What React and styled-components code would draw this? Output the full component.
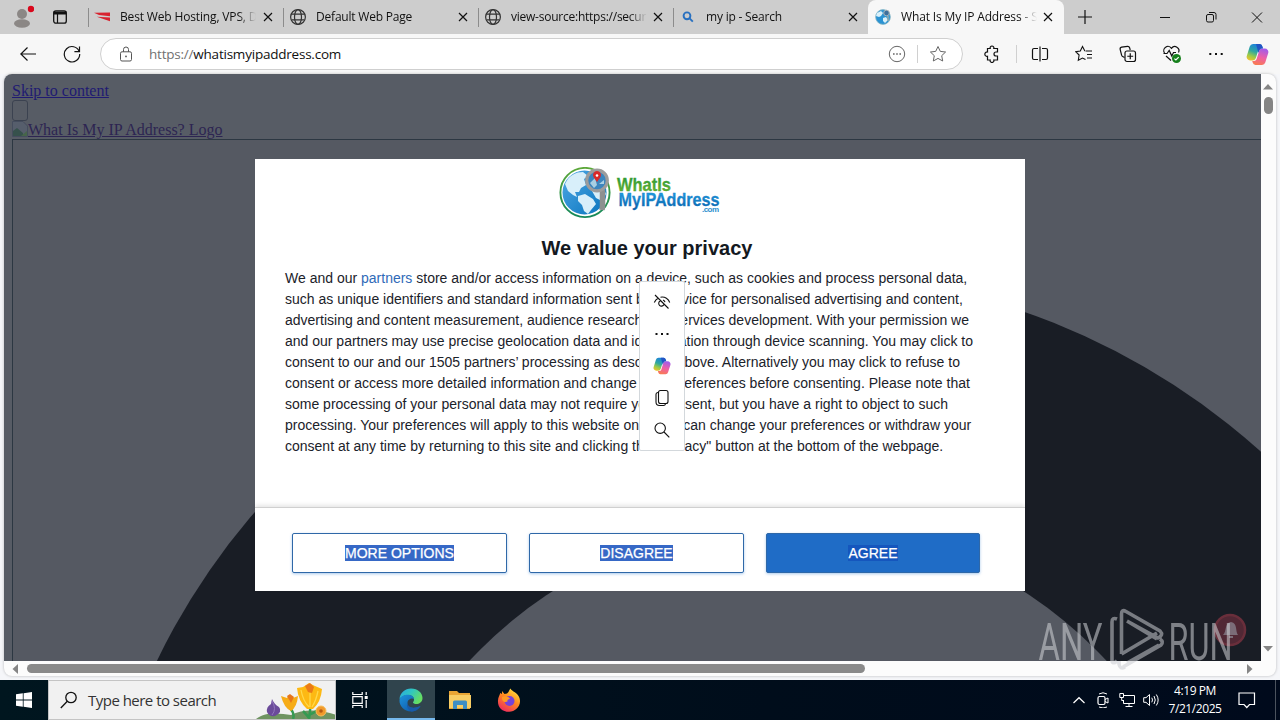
import React from "react";
import styled, { createGlobalStyle, css } from "styled-components";

const tabs = [
  { title: "Best Web Hosting, VPS, D", icon: "flag" },
  { title: "Default Web Page", icon: "globe", spacing: "-0.2px" },
  { title: "view-source:https://secur", icon: "globe", spacing: "-0.24px" },
  { title: "my ip - Search", icon: "search", spacing: "-0.2px" },
  { title: "What Is My IP Address - S", icon: "earth", active: true },
];

const paragraph = [
  "such as unique identifiers and standard information sent by a device for personalised advertising and content,",
  "advertising and content measurement, audience research and services development. With your permission we",
  "and our partners may use precise geolocation data and identification through device scanning. You may click to",
  "consent to our and our 1505 partners’ processing as described above. Alternatively you may click to refuse to",
  "consent or access more detailed information and change your preferences before consenting. Please note that",
  "some processing of your personal data may not require your consent, but you have a right to object to such",
  "processing. Your preferences will apply to this website only. You can change your preferences or withdraw your",
  'consent at any time by returning to this site and clicking the "Privacy" button at the bottom of the webpage.',
];

const Icon = ({ size = 16, w, h, box, children, ...rest }) => (
  <Svg
    width={w || size}
    height={h || size}
    viewBox={box || `0 0 ${w || size} ${h || size}`}
    {...rest}
  >
    {children}
  </Svg>
);

const Copilot = ({ size, id }) => (
  <Icon size={size} box="0 0 24 24">
    <defs>
      <linearGradient id={`${id}a`} x1="0.6" y1="0" x2="0.2" y2="1">
        <stop offset="0" stopColor="#1c7fe0" />
        <stop offset="0.45" stopColor="#2fa8a0" />
        <stop offset="0.75" stopColor="#9fcb46" />
        <stop offset="1" stopColor="#f2c12e" />
      </linearGradient>
      <linearGradient id={`${id}b`} x1="0.6" y1="0" x2="0.3" y2="1">
        <stop offset="0" stopColor="#a45be8" />
        <stop offset="0.5" stopColor="#ee5fa6" />
        <stop offset="1" stopColor="#f97c4f" />
      </linearGradient>
    </defs>
    <path
      d="M17.500 5.200 16.900 3.300A3 3 0 0 0 14.200 1H7.300A3.600 3.600 0 0 0 3.900 3.600L.8 13.500A3.700 3.700 0 0 0 4.300 18.200H7A3.500 3.500 0 0 0 10.300 15.700L13 7A2.700 2.700 0 0 1 15.500 5.200Z"
      fill={`url(#${id}a)`}
      stroke="none"
    />
    <path
      d="M6.500 18.800 7.100 20.700A3 3 0 0 0 9.800 23H16.700A3.600 3.600 0 0 0 20.100 20.400L23.200 10.500A3.700 3.700 0 0 0 19.700 5.800H17A3.500 3.500 0 0 0 13.700 8.300L11 17A2.700 2.700 0 0 1 8.500 18.800Z"
      fill={`url(#${id}b)`}
      stroke="none"
    />
    <path d="M10.500 1H14.200A2.800 2.800 0 0 1 16.900 3.200L17.800 5.800H17A3.500 3.500 0 0 0 13.700 8.300L13 10.500 11.500 5Z" fill="#2355c4" stroke="none" />
  </Icon>
);

const Favicon = ({ kind }) => {
  if (kind === "flag") {
    return (
      <Icon>
        <path d="M0 3.800 16 3.400V7.200L5 6ZM2.800 7.700 16 8.600V12.200Z" fill="#d8232f" stroke="none" />
      </Icon>
    );
  }
  if (kind === "globe") {
    return (
      <Icon strokeWidth="1.200" stroke="#333">
        <circle cx="8" cy="8" r="7.400" />
        <ellipse cx="8" cy="8" rx="3.500" ry="7.400" />
        <path d="M1.500 5.200H14.500M1.500 10.800H14.500" />
      </Icon>
    );
  }
  if (kind === "search") {
    return (
      <Icon stroke="#2870c0" strokeWidth="1.900">
        <circle cx="7" cy="6.800" r="3.400" />
        <path d="M9.400 9.200 12.800 12.600" />
      </Icon>
    );
  }
  return (
    <Icon>
      <circle cx="8" cy="8" r="7.400" fill="#2b93d3" stroke="#8cb8c4" strokeWidth="0.8" />
      <path d="M2 4 6 2 8 4 6 7 4 8 1 7ZM8 9 11 8 13 11 10 14 8 12Z" fill="#d9f0fa" stroke="none" />
      <circle cx="11.500" cy="4" r="2.800" fill="#3c6f9d" stroke="#aab4b8" />
      <path d="M13 7V12" stroke="#9aa" strokeWidth="1.500" />
    </Icon>
  );
};

const Close = () => (
  <Icon>
    <path d="M4 4 12 12M12 4 4 12" strokeWidth="1.200" />
  </Icon>
);

const TabStrip = () => (
  <Strip>
    <Profile>
      <Icon w={24} h={24}>
        <circle cx="12" cy="9" r="5" fill="#8b8785" stroke="none" />
        <ellipse cx="12" cy="18.500" rx="8" ry="4.200" fill="#8b8785" stroke="none" />
        <circle cx="21" cy="4" r="3.200" fill="#d9081c" stroke="none" />
      </Icon>
      <Icon w={16} h={16}>
        <rect x="1.700" y="1.800" width="12.600" height="12.400" rx="2.200" strokeWidth="1.300" />
        <path d="M1.700 4H14.300" strokeWidth="3" />
        <path d="M5.500 4V14" strokeWidth="1.200" />
      </Icon>
    </Profile>
    {tabs.map((tab) => (
      <Tab key={tab.title} $active={tab.active}>
        <Favicon kind={tab.icon} />
        <TabTitle $spacing={tab.spacing}>{tab.title}</TabTitle>
        <Close />
      </Tab>
    ))}
    <NewTab>
      <Icon>
        <path d="M8 1V15M1 8H15" strokeWidth="1.200" />
      </Icon>
    </NewTab>
    <WindowButtons>
      <Icon>
        <path d="M3 8.500H13" />
      </Icon>
      <Icon>
        <rect x="3.500" y="5.500" width="7" height="7.500" rx="1.500" />
        <path d="M6 3.500H11A2 2 0 0 1 13 5.500V10.500" />
      </Icon>
      <Icon>
        <path d="M3 3.500 13 13.500M13 3.500 3 13.500" />
      </Icon>
    </WindowButtons>
  </Strip>
);

const Toolbar = () => (
  <Bar>
    <NavButton>
      <Icon>
        <path d="M16 8H.8M7.500 1.500.8 8 7.500 14.500" strokeWidth="1.200" />
      </Icon>
    </NavButton>
    <NavButton>
      <Icon size={18}>
        <path d="M16.200 6.500A7.700 7.700 0 1 0 16.700 9M16.500 1.500V6.600H11.400" strokeWidth="1.200" />
      </Icon>
    </NavButton>
    <Address>
      <Icon stroke="#555">
        <rect x="2.500" y="5.800" width="11" height="9.200" rx="1.500" />
        <path d="M5.500 5.800V3.500A2.500 2.500 0 0 1 10.500 3.500V5.800" />
        <circle cx="8" cy="10.400" r="0.9" fill="#555" stroke="none" />
      </Icon>
      <Url>
        <span>https://</span>whatismyipaddress.com
      </Url>
      <Icon size={18} stroke="#666">
        <circle cx="9" cy="9" r="7.700" />
        <path d="M5 9H6.600M8.200 9H9.800M11.400 9H13" strokeWidth="1.600" />
      </Icon>
      <Divider $gap="11px" />
      <Icon size={18} stroke="#666">
        <path d="M9 1.500 11.300 6.400 16.600 7 12.700 10.700 13.700 16 9 13.400 4.300 16 5.300 10.700 1.400 7 6.700 6.400Z" />
      </Icon>
    </Address>
    <Tools>
      <ToolSlot $w="47px">
        <Icon size={18} strokeWidth="1.200">
          <path d="M4.500 3.500H7.200A1.900 1.900 0 1 1 10.800 3.500H14.500V7H13A2 2 0 0 0 13 11H14.500V15H10.800A1.900 1.900 0 1 1 7.200 15H4.500V11.300A2.200 2.200 0 1 1 4.500 7Z" />
        </Icon>
      </ToolSlot>
      <Divider $gap="1px" />
      <ToolSlot $w="44px">
        <Icon size={18} strokeWidth="1.200">
          <path d="M9 1.500V16.500M7 3.500H3A1.500 1.500 0 0 0 1.500 5V13A1.500 1.500 0 0 0 3 14.500H7M11 3.500H15A1.500 1.500 0 0 1 16.500 5V13A1.500 1.500 0 0 1 15 14.500H11" />
        </Icon>
      </ToolSlot>
      <ToolSlot $w="44px">
        <Icon size={18} strokeWidth="1.100">
          <path d="M10.500 6H17M12 9.500H17M12 13H17" />
          <path d="M10 5.800 9.700 5.800 7.500 1.500 5.300 6 .7 6.600 4.100 10 3.300 15.200 7.500 13 10.500 14.600" />
        </Icon>
      </ToolSlot>
      <ToolSlot $w="44px">
        <Icon size={18} strokeWidth="1.200">
          <rect x="6" y="6" width="10.500" height="10.500" rx="2" />
          <path d="M11.250 8.300V14.200M8.300 11.250H14.200M5.500 12.500 3.700 11.500A2 2 0 0 1 2.600 10L1.200 4.600A2 2 0 0 1 2.600 2.200L8.500 1.300A2 2 0 0 1 10.600 2.700L11.200 5" />
        </Icon>
      </ToolSlot>
      <ToolSlot $w="44px">
        <Icon size={20} strokeWidth="1.200">
          <path d="M2.500 9A4 4 0 0 1 9.500 4.300 4.100 4.100 0 0 1 16.500 8.500M4 12 9 16.500M1.500 9.500H5L7.200 6.500 9.800 12 11.500 8.500H14" />
          <circle cx="14.500" cy="14.500" r="4.500" fill="#16801c" stroke="none" />
          <path d="M12.400 14.600 13.900 16 16.700 13.200" stroke="#fff" />
        </Icon>
      </ToolSlot>
      <ToolSlot $w="44px">
        <Icon>
          <path d="M1.300 8H3.300M7 8H9M12.700 8H14.700" strokeWidth="2" />
        </Icon>
      </ToolSlot>
      <ToolSlot $w="39px">
        <Copilot size={23} id="bar" />
      </ToolSlot>
    </Tools>
  </Bar>
);

const SiteLogo = () => (
  <Icon w={162} h={52}>
    <defs>
      <linearGradient id="ocean" x1="0" y1="0" x2="1" y2="1">
        <stop offset="0" stopColor="#4fa8e4" />
        <stop offset="1" stopColor="#0874be" />
      </linearGradient>
      <linearGradient id="hoop" x1="0" y1="0" x2="0" y2="1">
        <stop offset="0" stopColor="#5da83a" />
        <stop offset="1" stopColor="#14885a" />
      </linearGradient>
      <linearGradient id="blueText" x1="0" y1="0" x2="0" y2="1">
        <stop offset="0.2" stopColor="#1f9be0" />
        <stop offset="1" stopColor="#0b5fa6" />
      </linearGradient>
      <linearGradient id="greenText" x1="0" y1="0" x2="0" y2="1">
        <stop offset="0.2" stopColor="#2f9a38" />
        <stop offset="1" stopColor="#74b82c" />
      </linearGradient>
    </defs>
    <circle cx="26" cy="25.500" r="24.600" stroke="url(#hoop)" strokeWidth="1.900" />
    <circle cx="25.500" cy="25.500" r="22" fill="url(#ocean)" stroke="none" />
    <path
      d="M6 17C10 8 17 5 24 5L29 9 25 12 27 18 22 21 20 25 16 25 18 30 14 28 9 24ZM19 29 26 27 34 32 37 37 32 43 29 47 25 44 23 38 19 34ZM33 24 44 20 47 27 43 34 37 31Z"
      fill="#d8effa"
      stroke="none"
    />
    <path d="M43.500 23V39L43 43" stroke="#8e9090" strokeWidth="5.500" />
    <circle cx="38" cy="13.500" r="10.300" fill="#3c85bd" stroke="#9c9c9c" strokeWidth="3.200" />
    <path d="M31 16 36 11 38 18 35 21ZM40 17 45 13 45 17Z" fill="#a8cfe3" stroke="none" />
    <path d="M38 15 34.500 10A4 4 0 1 1 41.500 10Z" fill="#da2929" stroke="none" />
    <circle cx="38" cy="8.500" r="1.300" fill="#fff" stroke="none" />
    <LogoText x="58" y="24" textLength="54" lengthAdjust="spacingAndGlyphs" fill="url(#greenText)" stroke="#45a336">
      WhatIs
    </LogoText>
    <LogoText x="59.500" y="38.500" textLength="101" lengthAdjust="spacingAndGlyphs" fill="url(#blueText)" stroke="#1880c8">
      MyIPAddress
    </LogoText>
    <LogoText $size="8px" x="143" y="44.500" textLength="17" fill="#2d8fce">
      .com
    </LogoText>
  </Icon>
);

const ConsentDialog = () => (
  <Dialog>
    <DialogBody>
      <SiteLogo />
      <Title>We value your privacy</Title>
      <Copy>
        <p>
          We and our <a>partners</a> store and/or access information on a device, such as cookies and process
          personal data,
        </p>
        {paragraph.map((line) => (
          <p key={line}>{line}</p>
        ))}
      </Copy>
    </DialogBody>
    <DialogFooter>
      <Choice>
        <mark>MORE OPTIONS</mark>
      </Choice>
      <Choice>
        <mark>DISAGREE</mark>
      </Choice>
      <Choice $primary>
        <mark>AGREE</mark>
      </Choice>
    </DialogFooter>
  </Dialog>
);

const SelectionMenu = () => (
  <MiniMenu>
    <Icon size={18} strokeWidth="1.100">
      <path d="M2 2 15.500 15.500M1.300 9.500C2.200 7 3.800 5.600 5.500 4.900M7.500 4.200C12 3.400 15.700 6 16.700 9.500M7.300 7.800A2.800 2.800 0 1 0 11 11.600M10 7A2.800 2.800 0 0 1 12 9.200" />
    </Icon>
    <Icon>
      <path d="M1.500 8H3.500M7 8H9M12.500 8H14.500" strokeWidth="2" />
    </Icon>
    <Copilot size={18} id="mini" />
    <Icon size={18} strokeWidth="1.100">
      <rect x="5.500" y="1.500" width="9.500" height="13" rx="2" />
      <path d="M5.500 3.500A2 2 0 0 0 3 5.500V13A3.500 3.500 0 0 0 6.500 16.500H10.500A2.200 2.200 0 0 0 12.500 14.800" />
    </Icon>
    <Icon size={18} strokeWidth="1.100">
      <circle cx="7.200" cy="7.200" r="5.200" />
      <path d="M11 11 16.300 16.300" />
    </Icon>
  </MiniMenu>
);

const Watermark = () => (
  <Mark width="216" height="64" viewBox="1034 608 216 64">
    <circle cx="1230" cy="630" r="15" fill="#5b2b38" stroke="#78323f" strokeWidth="2.500" opacity="0.85" />
    <path d="M1223 635C1227 632 1224 623 1231 622 1238 623 1235 632 1238 635ZM1229 636H1233V638H1229Z" fill="#7b6c78" />
    <g fill="#d2d4d8" opacity="0.55">
      <MarkText x="1038.500" y="660" textLength="64" lengthAdjust="spacingAndGlyphs">
        ANY
      </MarkText>
      <MarkText x="1168.500" y="660" textLength="64" lengthAdjust="spacingAndGlyphs">
        RUN
      </MarkText>
    </g>
    <path
      d="M1117 619Q1112 617 1112 622V660Q1112 665 1117 661M1121.500 654V614Q1121.500 609 1126 611.500L1160 631Q1164 635 1158 638L1127 621M1127 621 1157 639M1121.500 654 1157 633M1123 667 1161 645Q1164 642 1160 639M1119 661V664Q1120 670 1125 667M1127 663 1159 645"
      fill="none"
      stroke="#c9cbd0"
      strokeWidth="3.600"
      opacity="0.55"
    />
  </Mark>
);

const Viewport = () => (
  <Stage>
    <Card>
      <Page>
        <Skip>Skip to content</Skip>
        <EmptyButton />
        <LogoLink>
          <Icon>
            <path d="M.5.500H11L15.500 5V15.500H.5Z" stroke="#454d5e" fill="#565e6c" />
            <path d="M1 15V10L5 7 11 12V15Z" fill="#36514c" stroke="none" />
            <path d="M9 15 15 10V15Z" fill="#46654a" stroke="none" />
          </Icon>
          <span>What Is My IP Address? Logo</span>
        </LogoLink>
        <Artwork>
          <svg width="1248" height="521" viewBox="13 140 1248 521">
            <ellipse cx="787.500" cy="945" rx="695.500" ry="673.400" fill="#191d25" />
            <circle cx="788" cy="957" r="435" fill="#555962" />
          </svg>
        </Artwork>
      </Page>
      <VScroll>
        <Icon w={10} h={7}>
          <path d="M0 6.500 5 1 10 6.500Z" fill="#858585" stroke="none" />
        </Icon>
        <VThumb />
        <Icon w={10} h={6}>
          <path d="M0 0 5 5.500 10 0Z" fill="#858585" stroke="none" />
        </Icon>
      </VScroll>
      <HScroll>
        <Icon w={6} h={10}>
          <path d="M6 0 .5 5 6 10Z" fill="#858585" stroke="none" />
        </Icon>
        <HThumb />
        <Icon w={6} h={10}>
          <path d="M0 0 5.500 5 0 10Z" fill="#858585" stroke="none" />
        </Icon>
      </HScroll>
      <Overlay>
        <ConsentDialog />
      </Overlay>
      <SelectionMenu />
      <Watermark />
    </Card>
  </Stage>
);

const Flowers = () => (
  <Icon w={80} h={38} box="-4 0 80 38">
    <path d="M-3 38C8 30 22 33 32 34 45 27 65 29 77 34V38Z" fill="#6f9461" stroke="none" />
    <path d="M34 38Q36 33 31 27M50 38Q52 24 51 22M50 34Q58 30 62 27M44 30Q48 34 50 37" stroke="#359a52" strokeWidth="2.500" />
    <path d="M13 18Q15 23 20 26 24 31 16 35 10 36 8 31 7 26 12 23Z" fill="#6b4b9a" stroke="none" />
    <path d="M13 20Q18 28 13 34" stroke="#9276bd" strokeWidth="1" />
    <path d="M22 15 28 17 30 14 34 17 39 15Q38 26 32 30 25 27 22 15Z" fill="#f6ac17" stroke="none" />
    <path d="M28 15 31 13 35 16 32 22Z" fill="#e7751a" stroke="none" />
    <path d="M38 7 44 6 50 2 56 5 63 8Q62 21 54 28L48 28Q39 20 38 7Z" fill="#fdb913" stroke="none" />
    <path d="M46 5 51 2 55 6 53 12 49 11Z" fill="#ea7a18" stroke="none" />
    <path d="M42 9Q44 20 50 26M59 10Q57 20 53 26M51 12V26" stroke="#ffd84a" strokeWidth="1.300" />
    <circle cx="62" cy="30" r="5" fill="#f19a2b" stroke="#f7bd5b" />
    <circle cx="62" cy="30" r="1.800" fill="#b65a12" stroke="none" />
  </Icon>
);

const EdgeLogo = () => (
  <Icon size={24}>
    <defs>
      <linearGradient id="edgeTop" x1="0" y1="0" x2="1" y2="0.5">
        <stop offset="0" stopColor="#2aa7e5" />
        <stop offset="0.5" stopColor="#30c6c0" />
        <stop offset="1" stopColor="#66de62" />
      </linearGradient>
      <linearGradient id="edgeLow" x1="0" y1="0" x2="1" y2="1">
        <stop offset="0" stopColor="#1d93dc" />
        <stop offset="1" stopColor="#0c4fa0" />
      </linearGradient>
    </defs>
    <path d="M.5 11C1 5 6 .5 12 .5 19 .5 23.500 5 23.500 10 23.500 14 20 16 17.500 16 15.500 16 14 15.300 14 14.500 14 14 15 13.500 15 11.500 15 9 12.500 7 9 7 5 7 2 9 .5 11Z" fill="url(#edgeTop)" stroke="none" />
    <path d="M.5 12C1 8.500 5 6.800 9 6.800 12.500 6.800 15 9 15 11 13 9.500 8.500 11 8.500 15 8.500 19 13 22 21.500 18 19 22 16 23.500 12 23.500 5.500 23.500 0 18 .5 12Z" fill="url(#edgeLow)" stroke="none" />
    <path d="M8.500 15C8.500 19 13.500 21.500 21.500 18 19 22 16 23.500 12.500 23.400 9 22 7 18 8.500 15Z" fill="#195aa8" stroke="none" />
  </Icon>
);

const Taskbar = () => (
  <TaskRow>
    <TaskSlot>
      <Icon>
        <path d="M0 2.300 6.800 1.300V7.600H0ZM7.600 1.200 16 0V7.600H7.600ZM0 8.400H6.800V14.700L0 13.700ZM7.600 8.400H16V16L7.600 14.800Z" fill="#fff" stroke="none" />
      </Icon>
    </TaskSlot>
    <SearchBox>
      <Icon size={18} strokeWidth="1.300">
        <circle cx="11" cy="6.500" r="5.200" />
        <path d="M7.300 10.200.8 17" />
      </Icon>
      <span>Type here to search</span>
      <Flowers />
    </SearchBox>
    <TaskSlot>
      <Icon stroke="#fff" strokeWidth="1.200">
        <path d="M.8 0V2.500H10.200V0M.8 16V13.500H10.200V16M.8 4.700H10.200V11.300H.8ZM14.200 0V3M14.200 8V16" />
        <path d="M12.700 5.500H15.700" strokeWidth="3" />
      </Icon>
    </TaskSlot>
    <Spacer $w="3px" />
    <TaskSlot $active>
      <EdgeLogo />
    </TaskSlot>
    <TaskSlot $w="50px">
      <Icon w={22} h={20}>
        <path d="M0 1H8L10 3H21V19H0Z" fill="#e9a534" stroke="none" />
        <path d="M0 5H22V18H0Z" fill="#f8cd64" stroke="none" />
        <path d="M4 19V12Q4 10.500 5.500 10.500H16.500Q18 10.500 18 12V19H14V15H8V19Z" fill="#3f8ec4" stroke="none" />
      </Icon>
    </TaskSlot>
    <TaskSlot>
      <Icon size={24}>
        <defs>
          <linearGradient id="fox" x1="0.800" y1="0" x2="0.2" y2="1">
            <stop offset="0" stopColor="#ffe641" />
            <stop offset="0.45" stopColor="#ff8a1f" />
            <stop offset="1" stopColor="#ee2462" />
          </linearGradient>
        </defs>
        <path d="M5 3 7.500 6 10 5.500C12 4.500 12 2 13.500 .5 15 4 20.500 4 22.500 10 25 18 18 24 12 23.800 5 23.800 .5 19 1 12.500 1 9 3 7 3.200 5L5 6Z" fill="url(#fox)" stroke="none" />
        <circle cx="12.500" cy="13" r="5" fill="#7543d9" stroke="none" />
        <path d="M5 9C8 7.500 12 8.500 13 11 11 11 10 12 10.500 13.500 7.500 15 4.500 13 5 9Z" fill="#ff9a24" stroke="none" />
      </Icon>
    </TaskSlot>
    <Tray>
      <Icon size={12} stroke="#fff">
        <path d="M.5 9 6 3.700 11.500 9" strokeWidth="1.200" />
      </Icon>
      <Icon stroke="#fff">
        <rect x="3" y="4.500" width="7" height="8" rx="1.500" strokeWidth="1.200" />
        <path d="M10 7.500 13 6V11L10 9.500M4 2Q8-.5 12 2M4 15Q8 17 12 15" />
      </Icon>
      <Icon stroke="#fff">
        <path d="M5 3.500H15.500V11.500H4.500V8M10 11.500V14.500M6.500 14.500H13.500M.8 1.500H4.500V5.500H.8ZM2.700 5.500V8.500H4.500" />
      </Icon>
      <Icon stroke="#fff">
        <path d="M.7 5.700H3L6.500 2.500V13.500L3 10.300H.7ZM8.800 5.700Q10.200 8 8.800 10.300M11 4Q13.500 8 11 12M13.300 2.500Q17 8 13.300 13.500" />
      </Icon>
      <Clock>
        <span>4:19 PM</span>
        <span>7/21/2025</span>
      </Clock>
      <Icon w={18} h={18} stroke="#fff" strokeWidth="1.200">
        <path d="M1 2H16.500V13.500H11.500L8.800 16.500 6 13.500H1Z" />
      </Icon>
      <PeekLine />
    </Tray>
  </TaskRow>
);

const App = () => (
  <>
    <GlobalStyle />
    <Desktop>
      <TabStrip />
      <Toolbar />
      <Viewport />
      <Taskbar />
    </Desktop>
  </>
);

export default App;

const GlobalStyle = createGlobalStyle`
  * {
    box-sizing: border-box;
  }
  body {
    margin: 0;
    overflow: hidden;
  }
  p {
    margin: 0;
  }
`;

const Svg = styled.svg`
  display: block;
  flex-shrink: 0;
  fill: none;
  stroke: ${(props) => props.stroke || "currentColor"};
`;

const Desktop = styled.div`
  display: grid;
  grid-template-rows: 34px 40px 606px 40px;
  width: 1280px;
  height: 720px;
  background: #f7f7f7;
  color: #111;
  font-family: "Open Sans", "Noto Sans", sans-serif;
`;

const Strip = styled.div`
  display: flex;
  background: #cdcdcd;
`;

const Profile = styled.div`
  display: flex;
  align-items: center;
  gap: 18px;
  width: 88px;
  padding: 0 0 1px 10px;
`;

const Tab = styled.div`
  display: flex;
  align-items: center;
  width: 195px;
  padding: 0 7px 0 6px;
  background: linear-gradient(#8c8c8c, #8c8c8c) 0 8px / 1px 19px no-repeat;
  & + & {
    padding: 0 7px;
  }
  ${(props) =>
    props.$active &&
    css`
      && {
        width: 196px;
        padding: 0 8px 0 7px;
      }
      border-radius: 8px 8px 0 0;
      background: #f7f7f7;
    `}
`;

const TabTitle = styled.span`
  flex: 1;
  margin: 0 -2px 1px 10px;
  white-space: nowrap;
  font-size: 12px;
  letter-spacing: ${(props) => props.$spacing || "-0.15px"};
  mask-image: linear-gradient(90deg, #000 118px, transparent 136px);
`;

const NewTab = styled.div`
  display: grid;
  place-items: center;
  width: 42px;
`;

const WindowButtons = styled.div`
  display: grid;
  grid-template-columns: repeat(3, 46px);
  place-items: center;
  margin-left: auto;
`;

const Bar = styled.div`
  display: flex;
  align-items: center;
  padding-left: 6px;
`;

const NavButton = styled.div`
  display: grid;
  place-items: center;
  width: 44px;
`;

const Address = styled.div`
  display: flex;
  align-items: center;
  width: 863px;
  height: 32px;
  margin-left: 6px;
  padding: 0 15px 0 17px;
  border: 1px solid #cfcfcf;
  border-radius: 16px;
  background: #fff;
`;

const Url = styled.div`
  flex: 1;
  margin-left: 15px;
  font-size: 13.5px;
  letter-spacing: -0.22px;
  span {
    color: #717171;
  }
`;

const Divider = styled.div`
  width: 1px;
  height: 18px;
  margin: 0 ${(props) => props.$gap || 0};
  background: #d0d0d0;
`;

const Tools = styled.div`
  display: flex;
  align-items: center;
  padding-left: 5px;
`;

const ToolSlot = styled.div`
  display: grid;
  place-items: center;
  width: ${(props) => props.$w};
`;

const Stage = styled.div`
  padding: 0 4px 4px;
  background: #f5f6f9;
`;

const Card = styled.div`
  position: relative;
  display: grid;
  grid-template: 587px 15px / 1257px 15px;
  height: 602px;
  border-radius: 8px;
  background: #fcfcfc;
  box-shadow: 0 0 3px rgba(0, 0, 0, 0.25);
`;

const Page = styled.div`
  display: flex;
  flex-direction: column;
  align-items: flex-start;
  padding: 8px 0 0 8px;
  overflow: hidden;
  border-radius: 8px 0 0 0;
  background: #575c65;
  font: 16px/18px "Liberation Serif", serif;
`;

const Skip = styled.a`
  color: #1f1a72;
  text-decoration: underline;
`;

const EmptyButton = styled.div`
  width: 16px;
  height: 21px;
  border: 1px solid #3b4250;
  border-radius: 3px;
`;

const LogoLink = styled.a`
  display: flex;
  height: 18px;
  color: #2d2552;
  span {
    text-decoration: underline;
  }
`;

const Artwork = styled.div`
  width: 1249px;
  height: 522px;
  border: solid #2c3742;
  border-width: 1px 0 0 1px;
  background: #555962;
  svg {
    display: block;
  }
`;

const VScroll = styled.div`
  display: flex;
  flex-direction: column;
  align-items: center;
  padding: 9px 1px 9px 0;
  svg:last-child {
    margin-top: auto;
  }
`;

const VThumb = styled.div`
  width: 9px;
  height: 17px;
  margin-top: 7px;
  border-radius: 5px;
  background: #858585;
`;

const HScroll = styled.div`
  display: flex;
  align-items: center;
  padding: 0 8px;
  svg:last-child {
    margin-left: auto;
  }
`;

const HThumb = styled.div`
  width: 838px;
  height: 9px;
  margin-left: 9px;
  border-radius: 5px;
  background: #8a8a8a;
`;

const Overlay = styled.div`
  position: absolute;
  inset: 0;
  display: grid;
  place-items: center;
`;

const Dialog = styled.div`
  display: grid;
  grid-template-rows: 348px 84px;
  width: 770px;
  height: 432px;
  background: #fff;
  color: #1b222a;
  font-family: "Liberation Sans", Arial, sans-serif;
`;

const DialogBody = styled.div`
  display: flex;
  flex-direction: column;
  align-items: center;
  padding: 8px 30px 0;
`;

const LogoText = styled.text`
  font: bold ${(props) => props.$size || "18.5px"} "Liberation Sans", Arial, sans-serif;
  stroke-width: ${(props) => (props.$size ? 0 : "0.3px")};
`;

const Title = styled.h1`
  margin: 17px 0 8px 14px;
  font-size: 20px;
  line-height: 24px;
  color: #14191f;
`;

const Copy = styled.div`
  align-self: flex-start;
  font-size: 14px;
  line-height: 21px;
  white-space: nowrap;
  a {
    color: #2f6ab8;
  }
`;

const DialogFooter = styled.div`
  display: grid;
  grid-template-columns: 215px 215px 214px;
  align-items: start;
  gap: 22px;
  padding: 25px 0 0 37px;
  border-top: 1px solid #d0d0d0;
  box-shadow: 0 -2px 4px rgba(0, 0, 0, 0.1);
`;

const Choice = styled.button`
  height: 40px;
  padding: 0;
  border: 1px solid #2f68a8;
  border-radius: 2px;
  background: ${(props) => (props.$primary ? "#1f6cc6" : "#fff")};
  box-shadow: 0 1px 3px rgba(40, 120, 210, 0.4);
  font: 14px/14px "Liberation Sans", Arial, sans-serif;
  -webkit-text-stroke: 0.25px #fff;
  mark {
    background: ${(props) => (props.$primary ? "#1556bd" : "#3668c6")};
    color: #fff;
  }
`;

const MiniMenu = styled.div`
  position: absolute;
  left: 635px;
  top: 207px;
  display: grid;
  grid-template-rows: repeat(5, 32px);
  place-items: center;
  width: 46px;
  height: 170px;
  padding-top: 4px;
  border: 1px solid #d3d8dc;
  border-radius: 2px;
  background: #fff;
`;

const Mark = styled.svg`
  position: absolute;
  left: 1030px;
  top: 534px;
`;

const MarkText = styled.text`
  font: 400 51px Roboto, sans-serif;
`;

const TaskRow = styled.div`
  display: flex;
  background: linear-gradient(90deg, #00161f, #000d1b 60%, #000a1c);
`;

const TaskSlot = styled.div`
  display: grid;
  place-items: center;
  width: ${(props) => props.$w || "48px"};
  ${(props) =>
    props.$active &&
    css`
      background: #30444d;
      box-shadow: inset 0 -2px #76b9ed;
    `}
`;

const Spacer = styled.div`
  width: ${(props) => props.$w};
`;

const SearchBox = styled.div`
  display: flex;
  align-items: center;
  width: 288px;
  padding-left: 11px;
  border: 1px solid #c4c4c4;
  background: #f1f1f1;
  span {
    margin-left: 10px;
    font-size: 15px;
    letter-spacing: -0.52px;
    color: #333;
    white-space: nowrap;
  }
  svg:last-child {
    margin-left: auto;
  }
`;

const Tray = styled.div`
  display: flex;
  align-items: center;
  gap: 8px;
  margin-left: auto;
  svg:first-child {
    margin-right: 2px;
  }
`;

const Clock = styled.div`
  display: flex;
  flex-direction: column;
  align-items: center;
  width: 56px;
  margin: 0 7px 0 0;
  color: #fff;
  font-size: 12px;
  line-height: 18px;
  letter-spacing: -0.42px;
  white-space: nowrap;
`;

const PeekLine = styled.div`
  width: 1px;
  height: 40px;
  margin: 0 4px 0 11px;
  background: #4b535e;
`;
